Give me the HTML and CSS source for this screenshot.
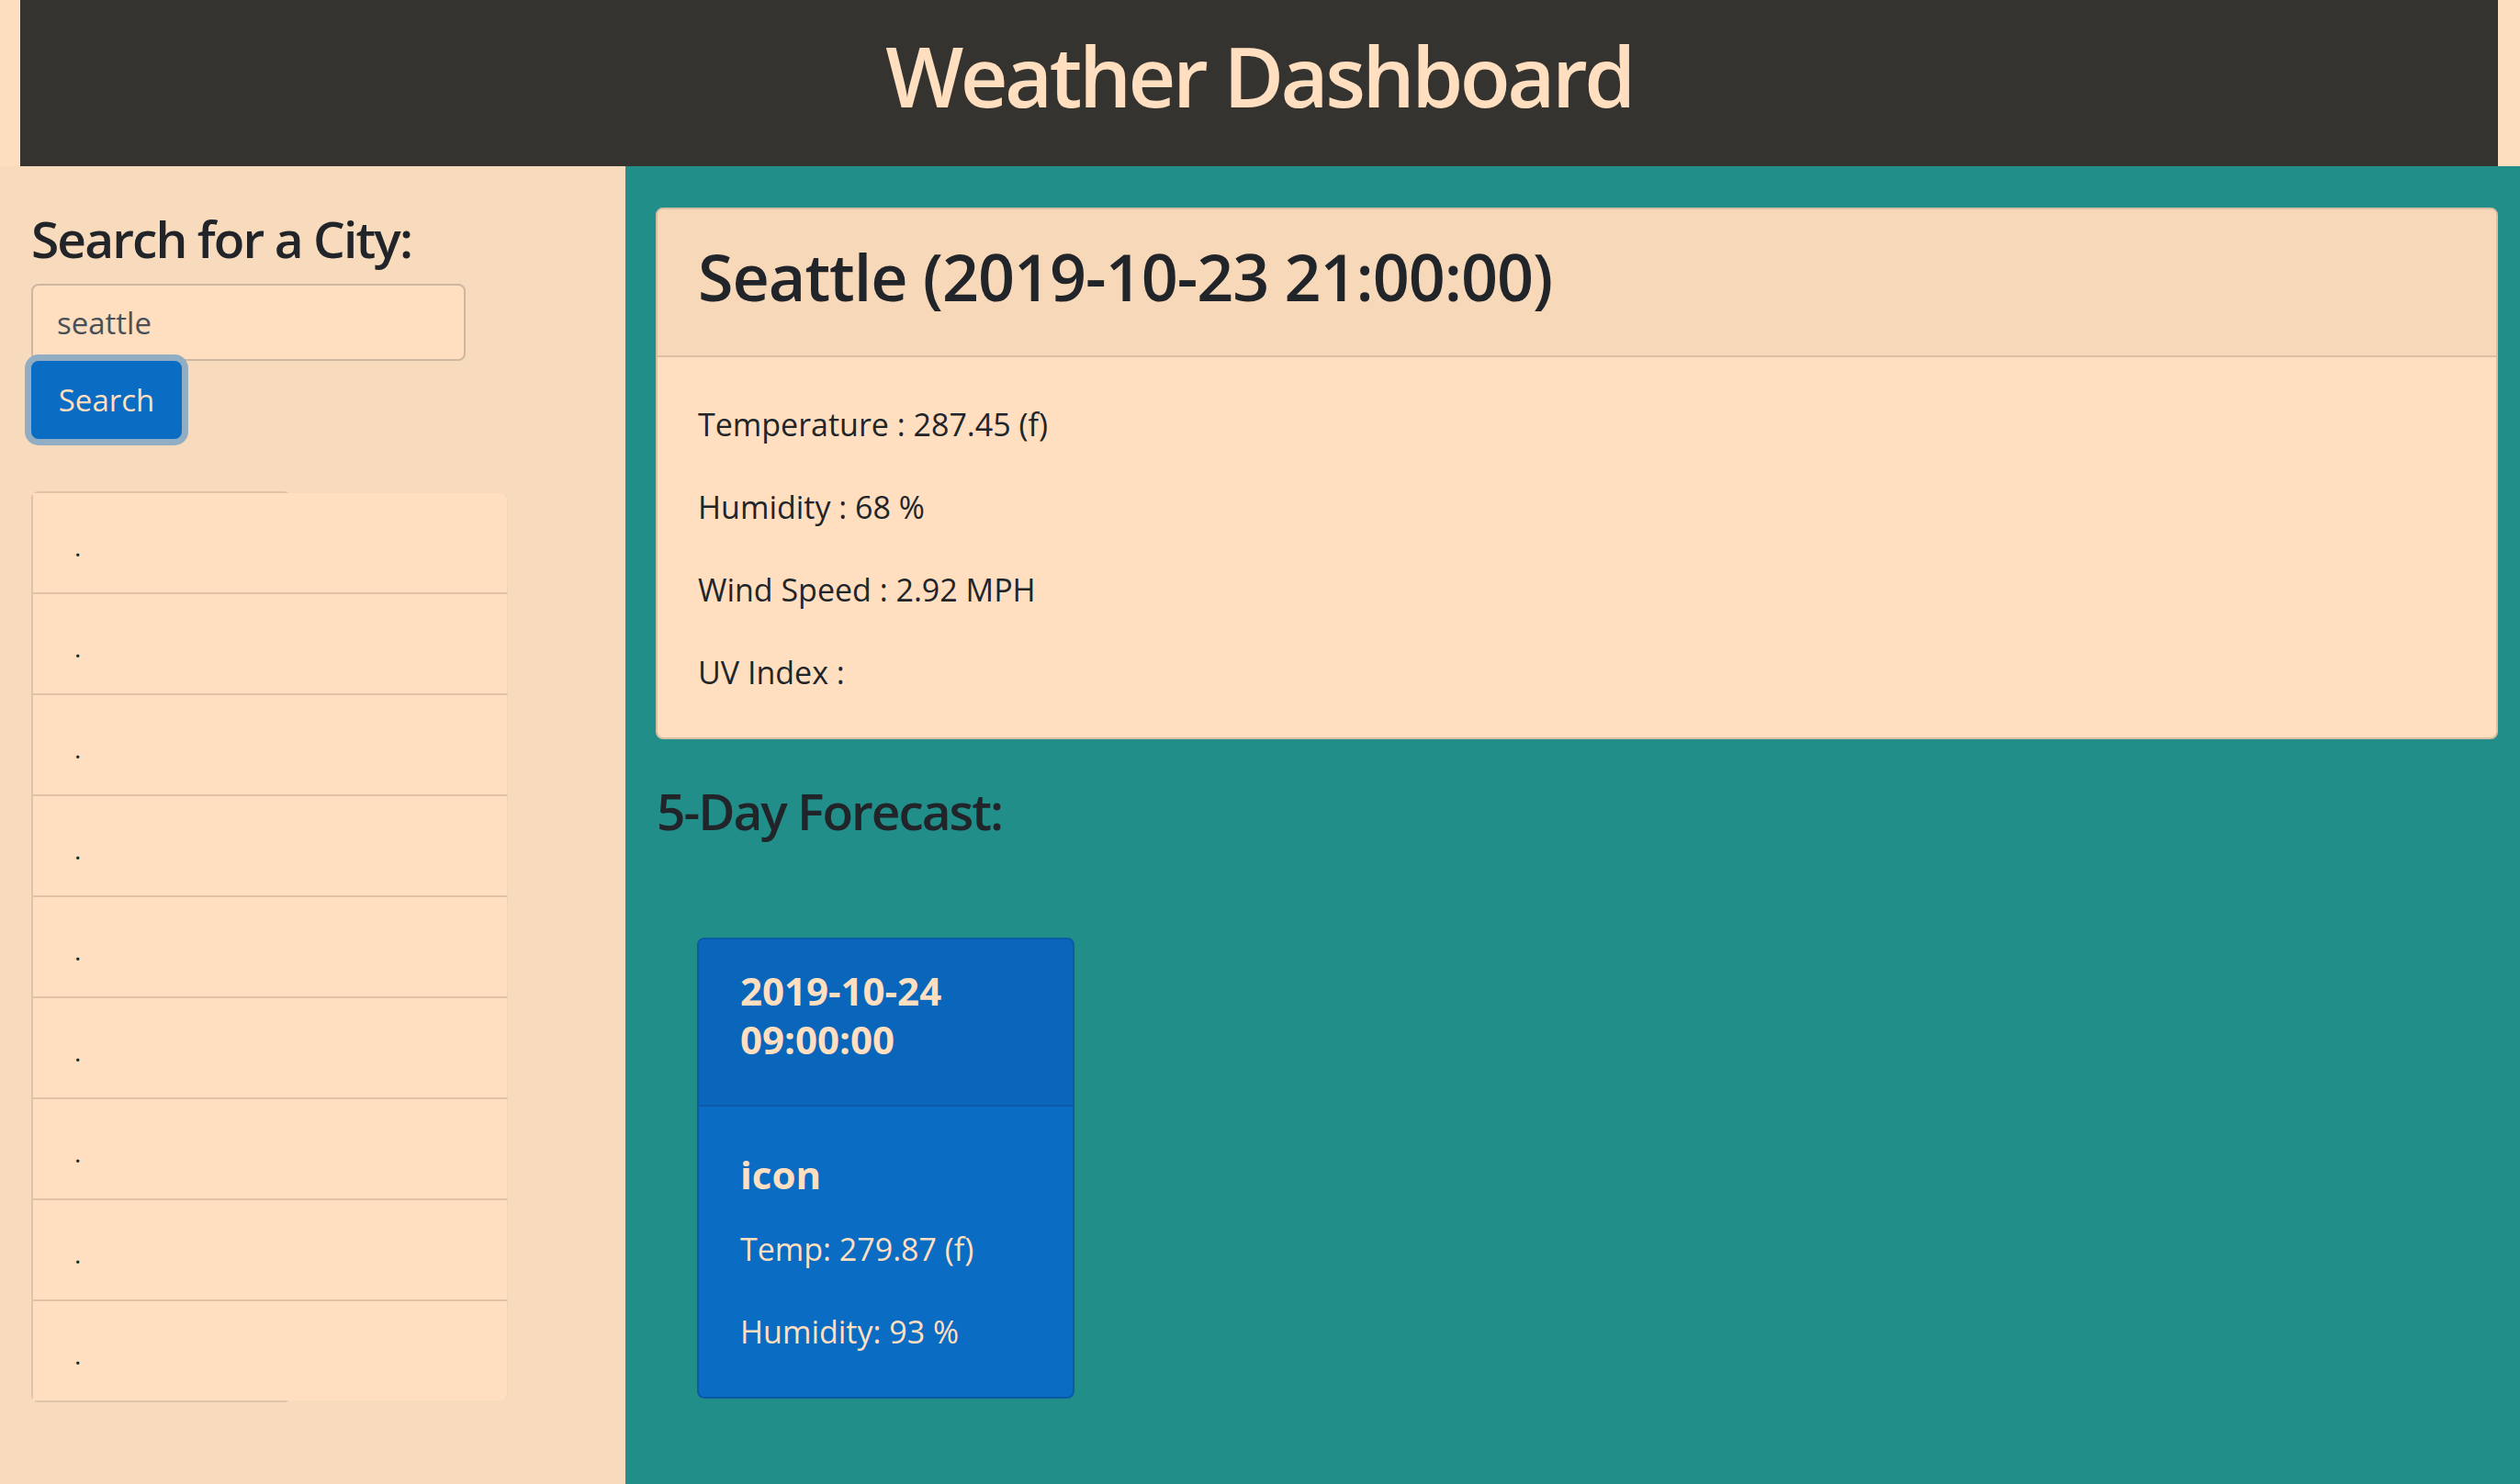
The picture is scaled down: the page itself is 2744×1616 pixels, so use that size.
FILE: index.html
```html
<!DOCTYPE html>
<html lang="en">
<head>
<meta charset="utf-8">
<title>Weather Dashboard</title>
<link rel="stylesheet" href="styles.css">
</head>
<body>
<header class="topbar">
  <h1 class="app-title">Weather Dashboard</h1>
</header>
<div class="layout">
  <aside class="sidebar">
    <h2 class="search-title">Search for a City:</h2>
    <input class="city-input" type="text" value="seattle">
    <button class="search-btn" type="button">Search</button>
    <ul class="history">
      <li>.</li>
      <li>.</li>
      <li>.</li>
      <li>.</li>
      <li>.</li>
      <li>.</li>
      <li>.</li>
      <li>.</li>
      <li>.</li>
    </ul>
  </aside>
  <main class="content">
    <section class="current-card">
      <div class="current-header">
        <h1 class="current-title">Seattle (2019-10-23 21:00:00)</h1>
      </div>
      <div class="current-body">
        <p>Temperature : 287.45 (f)</p>
        <p>Humidity : 68 %</p>
        <p>Wind Speed : 2.92 MPH</p>
        <p>UV Index :</p>
      </div>
    </section>
    <h2 class="forecast-title">5-Day Forecast:</h2>
    <div class="forecast-row">
      <div class="forecast-card">
        <div class="forecast-header">2019-10-24 09:00:00</div>
        <div class="forecast-body">
          <h5 class="forecast-icon">icon</h5>
          <p>Temp: 279.87 (f)</p>
          <p>Humidity: 93 %</p>
        </div>
      </div>
    </div>
  </main>
</div>
</body>
</html>
```
FILE: styles.css
```css
* {
  box-sizing: border-box;
}

html, body {
  margin: 0;
  padding: 0;
}

body {
  background: #fddfc0;
  font-family: "Open Sans", "Noto Sans", "Liberation Sans", sans-serif;
  color: #212529;
}

.topbar {
  margin: 0 24px 0 22px;
  height: 181px;
  background: #35332f;
  text-align: center;
}

.app-title {
  margin: 0;
  font-size: 90px;
  font-weight: 600;
  line-height: 164px;
  letter-spacing: -3.5px;
  color: #ffdfc0;
}

.layout {
  display: flex;
  min-height: calc(100vh - 181px);
}

.sidebar {
  width: 681px;
  flex: 0 0 681px;
  background: #f8dbbd;
  padding: 46px 0 40px 34px;
}

.search-title {
  margin: 0 0 16px;
  font-size: 55px;
  font-weight: 600;
  line-height: 66px;
  letter-spacing: -1.9px;
}

.city-input {
  display: block;
  width: 473px;
  height: 84px;
  margin: 0;
  padding: 0 26px;
  border: 2px solid #cdb7a1;
  border-radius: 8px;
  background: #ffdfc0;
  font-family: inherit;
  font-size: 33px;
  color: #495057;
  outline: none;
}

.search-btn {
  display: block;
  width: 164px;
  height: 85px;
  margin: 0;
  padding: 0;
  border: none;
  border-radius: 8px;
  background: #0a6cc2;
  box-shadow: 0 0 0 7px #91adc3;
  font-family: inherit;
  font-size: 33px;
  color: #ffdfc0;
  text-align: center;
  cursor: pointer;
}

.history {
  list-style: none;
  margin: 57px 0 0;
  padding: 0;
  width: 283px;
  border: 2px solid #dfc3a8;
  border-radius: 8px;
}

.history li {
  width: 517px;
  height: 110px;
  padding: 37px 0 0 45px;
  background: #ffdfc0;
  border-bottom: 2px solid #e0c3a6;
  border-right: 1px solid #f3d4b5;
  font-size: 28px;
  line-height: 42px;
}

.history li:first-child {
  border-top-right-radius: 8px;
}

.history li:last-child {
  height: 108px;
  border-bottom: none;
  border-bottom-right-radius: 8px;
}

.content {
  flex: 1;
  background: #218e8a;
  padding: 45px 24px 40px 33px;
}

.current-card {
  border: 2px solid #d9bea3;
  border-radius: 8px;
  background: #ffdfc0;
  overflow: hidden;
}

.current-header {
  background: #f7d8b9;
  border-bottom: 2px solid #dcc0a4;
  padding: 31px 44px 44px;
}

.current-title {
  margin: 0;
  font-size: 70px;
  font-weight: 600;
  line-height: 84px;
  letter-spacing: -1px;
}

.current-body {
  padding: 47px 44px 45px;
}

.current-body p {
  margin: 0 0 38px;
  font-size: 34px;
  line-height: 52px;
}

.current-body p:last-child {
  margin-bottom: 0;
}

.forecast-title {
  margin: 45px 0 0 1px;
  font-size: 55px;
  font-weight: 600;
  line-height: 66px;
  letter-spacing: -2px;
}

.forecast-row {
  display: flex;
  padding: 105px 0 0 45px;
}

.forecast-card {
  width: 411px;
  border: 2px solid #0a5aa6;
  border-radius: 8px;
  background: #0a6cc2;
  color: #ffdfc0;
  overflow: hidden;
}

.forecast-header {
  background: #0966bb;
  border-bottom: 2px solid #0a5aa8;
  padding: 29px 45px 45px;
  font-size: 42px;
  font-weight: 700;
  line-height: 53px;
}

.forecast-body {
  padding: 47px 45px 45px;
}

.forecast-icon {
  margin: 0 0 29px;
  font-size: 42px;
  font-weight: 700;
  line-height: 53px;
}

.forecast-body p {
  margin: 0 0 38px;
  font-size: 34px;
  line-height: 52px;
}

.forecast-body p:last-child {
  margin-bottom: 0;
}
```
